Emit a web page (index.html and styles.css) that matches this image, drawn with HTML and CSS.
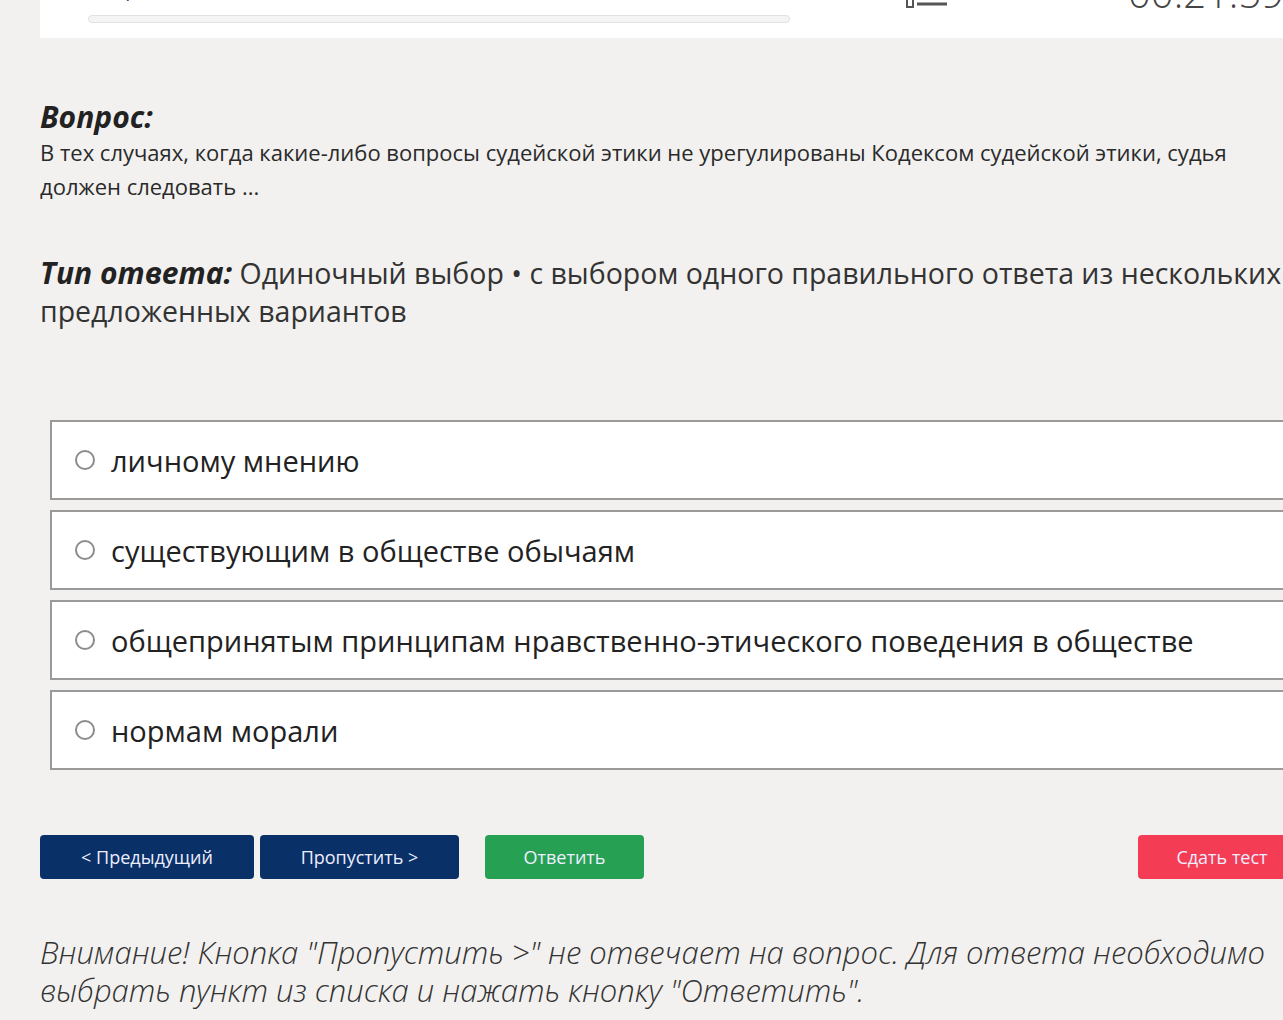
FILE: index.html
```html
<!DOCTYPE html>
<html lang="ru">
<head>
    <meta charset="UTF-8">
    <meta name="viewport" content="width=device-width, initial-scale=1.0">
    <title>Тестирование</title>
    <link rel="stylesheet" href="styles.css">
</head>
<body>
    <div class="page">
        <div class="test-header">
            <div class="header-row">
                <span class="test-name">Вопрос 7 из 40</span>
                <span class="header-icon">
                    <svg width="42" height="40" viewBox="0 0 42 40"><rect x="2" y="2" width="6" height="34" fill="none" stroke="#555" stroke-width="2"/><line x1="12" y1="33" x2="42" y2="33" stroke="#555" stroke-width="3"/></svg>
                </span>
                <span class="timer">00:21:59</span>
            </div>
            <div class="progress"><div class="progress-fill" style="width: 0%"></div></div>
        </div>

        <div class="question">
            <h2>Вопрос:</h2>
            <p>В тех случаях, когда какие-либо вопросы судейской этики не урегулированы Кодексом судейской этики, судья должен следовать ...</p>
        </div>

        <div class="answer-type">
            <b>Тип ответа:</b> Одиночный выбор • с выбором одного правильного ответа из нескольких предложенных вариантов
        </div>

        <div class="options">
            <label class="option"><input type="radio" name="answer"><span>личному мнению</span></label>
            <label class="option"><input type="radio" name="answer"><span>существующим в обществе обычаям</span></label>
            <label class="option"><input type="radio" name="answer"><span>общепринятым принципам нравственно-этического поведения в обществе</span></label>
            <label class="option"><input type="radio" name="answer"><span>нормам морали</span></label>
        </div>

        <div class="buttons">
            <button class="btn btn-nav btn-prev">&lt; Предыдущий</button>
            <button class="btn btn-nav btn-skip">Пропустить &gt;</button>
            <button class="btn btn-answer">Ответить</button>
            <button class="btn btn-finish">Сдать тест</button>
        </div>

        <p class="notice">Внимание! Кнопка "Пропустить &gt;" не отвечает на вопрос. Для ответа необходимо выбрать пункт из списка и нажать кнопку "Ответить".</p>
    </div>
</body>
</html>
```

FILE: styles.css
```css
body {
    margin: 0;
    background: #f2f1ef;
    font-family: "Open Sans", "Noto Sans", sans-serif;
    color: #222;
    overflow: hidden;
}
.page {
    width: 1260px;
    padding-left: 40px;
}
.test-header {
    background: #fff;
    margin-top: -50px;
    padding: 10px 48px 15px 48px;
}
.header-row {
    display: flex;
    align-items: flex-end;
    height: 48px;
    color: #444;
}
.test-name {
    flex-shrink: 0;
    width: 817px;
    font-size: 20px;
    line-height: 20px;
    margin-bottom: 9px;
}
.header-icon {
    flex-shrink: 0;
    width: 223px;
    height: 40px;
    margin-bottom: -3px;
}
.timer {
    flex-shrink: 0;
    font-size: 40px;
    line-height: 1;
    font-weight: 300;
    margin-bottom: -5px;
}
.progress {
    width: 700px;
    height: 6px;
    margin-top: 7px;
    background: #f4f4f4;
    border: 1px solid #e2e2e2;
    border-radius: 5px;
}
.progress-fill {
    height: 100%;
    background: #0a3068;
}
.question {
    margin-top: 61px;
}
.question h2 {
    margin: 0;
    font-size: 30px;
    font-style: italic;
    font-weight: 700;
    line-height: 36px;
}
.question p {
    margin: 0;
    font-size: 22px;
    line-height: 34px;
    color: #2a2a2a;
}
.answer-type {
    margin-top: 51px;
    font-size: 28.5px;
    line-height: 38px;
    color: #333;
}
.answer-type b {
    font-size: 30px;
    font-style: italic;
    color: #222;
}
.options {
    margin-top: 90px;
    margin-left: 10px;
    display: flex;
    flex-direction: column;
    gap: 10px;
}
.option {
    display: flex;
    align-items: center;
    height: 76px;
    background: #fff;
    border: 2px solid #9a9a9a;
    border-right: none;
    padding-left: 23px;
    font-size: 29px;
    color: #222;
}
.option input {
    appearance: none;
    flex-shrink: 0;
    width: 20px;
    height: 20px;
    margin: 0 16px 0 0;
    border: 2px solid #8c8c8c;
    border-radius: 50%;
    background: #fff;
}
.buttons {
    display: flex;
    gap: 6px;
    margin-top: 65px;
}
.btn {
    height: 44px;
    border: none;
    border-radius: 4px;
    font-family: inherit;
    font-size: 18px;
    color: #eef;
    cursor: pointer;
}
.btn-nav {
    background: #0a3068;
}
.btn-prev {
    width: 214px;
}
.btn-skip {
    width: 199px;
}
.btn-answer {
    width: 159px;
    margin-left: 20px;
    background: #26a154;
}
.btn-finish {
    width: 168px;
    margin-left: auto;
    margin-right: -6px;
    background: #f43d55;
}
.notice {
    margin: 54px 0 0 0;
    font-size: 31px;
    font-style: italic;
    font-weight: 300;
    line-height: 38px;
    color: #333;
}
```
